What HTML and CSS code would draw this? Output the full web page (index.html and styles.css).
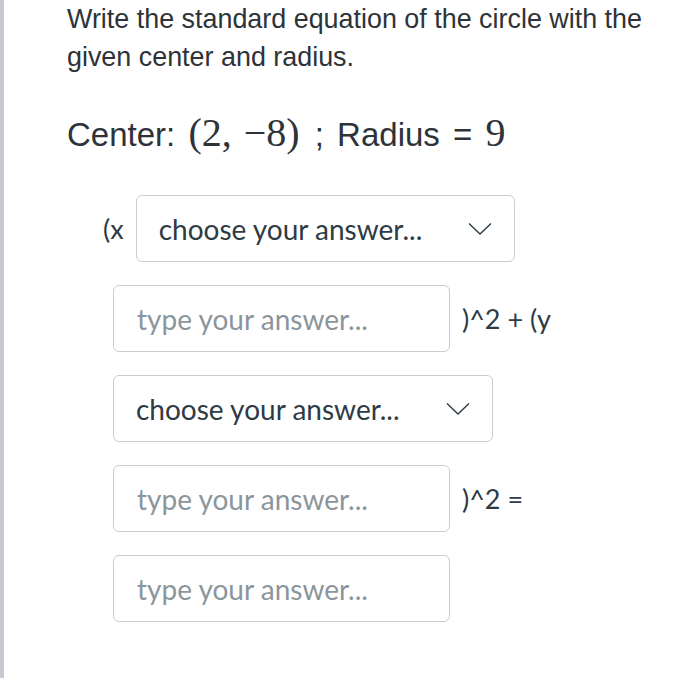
FILE: index.html
```html
<!DOCTYPE html>
<html>
<head>
<meta charset="utf-8">
<link rel="stylesheet" href="styles.css">
</head>
<body>
<div class="page">
  <div class="content">
    <p class="question">Write the standard equation of the circle with the given center and radius.</p>
    <p class="given">Center: <span class="math paren">(2,<span class="thin"></span>−8)</span> <span class="sep">;</span> Radius <span class="eq">=</span> <span class="math num">9</span></p>
    <div class="rows">
      <div class="row row-first">
        <span class="label">(x</span>
        <div class="select-wrap wide">
          <select class="select"><option>choose your answer...</option></select>
          <svg class="chev" width="24" height="14" viewBox="0 0 24 14"><path d="M1 1.5 L12 12 L23 1.5" fill="none" stroke="#2d3b45" stroke-width="1.4"/></svg>
        </div>
      </div>
      <div class="row">
        <input class="field" type="text" placeholder="type your answer...">
        <span class="label after">)^2 + (y</span>
      </div>
      <div class="row">
        <div class="select-wrap">
          <select class="select"><option>choose your answer...</option></select>
          <svg class="chev" width="24" height="14" viewBox="0 0 24 14"><path d="M1 1.5 L12 12 L23 1.5" fill="none" stroke="#2d3b45" stroke-width="1.4"/></svg>
        </div>
      </div>
      <div class="row">
        <input class="field" type="text" placeholder="type your answer...">
        <span class="label after">)^2 =</span>
      </div>
      <div class="row">
        <input class="field" type="text" placeholder="type your answer...">
      </div>
    </div>
  </div>
</div>
</body>
</html>
```

FILE: styles.css
```css
html, body {
  margin: 0;
  padding: 0;
  background: #ffffff;
}
.page {
  display: flex;
  min-height: 678px;
  border-left: 4px solid #c6cad0;
  box-sizing: border-box;
}
.content {
  flex: 1;
  padding-left: 63px;
  color: #2d3b45;
}
.question {
  margin: 0;
  font-family: "Liberation Sans", Arial, sans-serif;
  font-size: 26.9px;
  line-height: 38px;
  width: 610px;
  color: #2d3338;
}
.given {
  margin: 37px 0 0 0;
  font-family: "Liberation Sans", Arial, sans-serif;
  font-size: 33px;
  line-height: 40px;
  height: 40px;
  color: #2d3338;
  white-space: nowrap;
}
.math {
  font-family: "Liberation Serif", "Times New Roman", serif;
  font-size: 40px;
  line-height: 40px;
}
.paren {
  margin: 0 6px 0 4px;
}
.thin {
  display: inline-block;
  width: 12px;
}
.sep {
  margin-right: 4px;
}
.eq {
  margin: 0 4px 0 4px;
}
.num {
  margin-left: 0;
}
.rows {
  display: flex;
  flex-direction: column;
  gap: 23px;
  margin-top: 42px;
  margin-left: 46px;
}
.row {
  display: flex;
  align-items: center;
  height: 67px;
  font-family: Lato, sans-serif;
}
.row-first {
  margin-left: -10px;
}
.label {
  font-size: 27px;
  color: #2d3b45;
  margin-right: 12px;
}
.label.after {
  margin-left: 12px;
  margin-right: 0;
}
.select-wrap {
  position: relative;
  width: 380px;
  height: 67px;
}
.select-wrap.wide {
  width: 379px;
}
.select {
  appearance: none;
  -webkit-appearance: none;
  width: 100%;
  height: 100%;
  box-sizing: border-box;
  border: 1.5px solid #c7cdd1;
  border-radius: 6px;
  background: #ffffff;
  padding: 0 0 0 22px;
  font-family: Lato, sans-serif;
  font-size: 28px;
  color: #2d3b45;
}
.chev {
  position: absolute;
  right: 23px;
  top: 27px;
  pointer-events: none;
}
.field {
  width: 337px;
  height: 67px;
  box-sizing: border-box;
  border: 1.5px solid #c7cdd1;
  border-radius: 6px;
  padding: 0 0 0 23px;
  font-family: Lato, sans-serif;
  font-size: 28px;
  color: #2d3b45;
  background: #ffffff;
}
.field::placeholder {
  color: #8b959c;
  opacity: 1;
}
```
